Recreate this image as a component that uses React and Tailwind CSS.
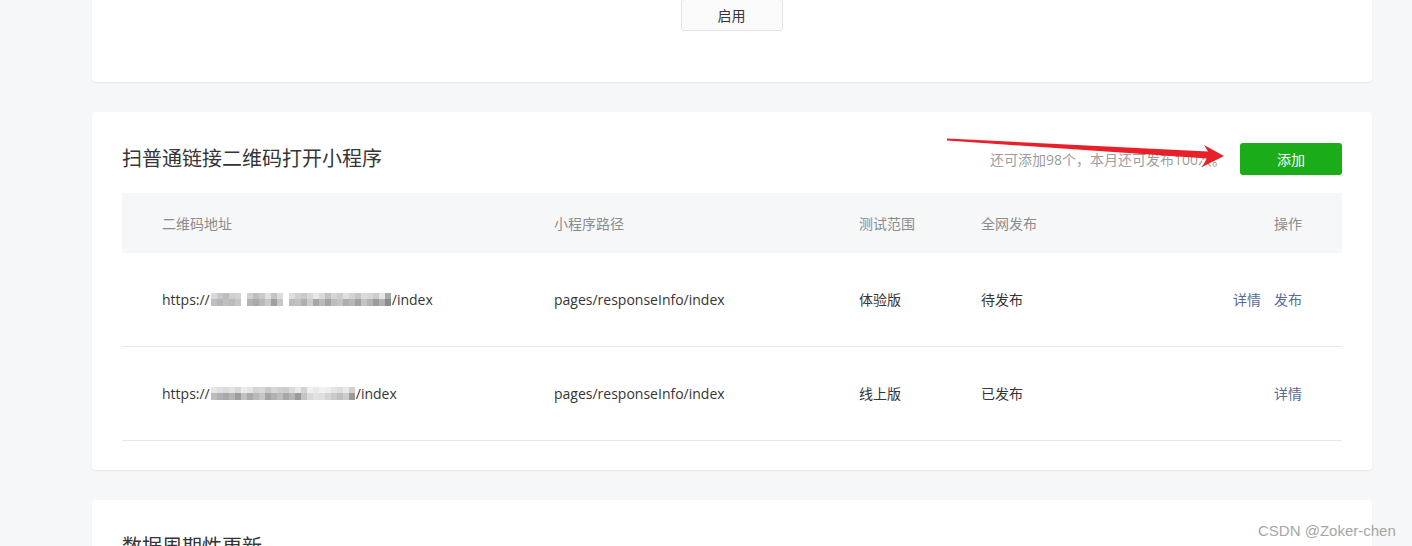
import React from "react";

const blur1Top = ["#d9d9d9","#c8c8c8","#bdbdbd","#cfcfcf","#d4d4d4","#fff","#d0d0d0","#bfbfbf","#cacaca","#e2e2e2","#c4c4c4","#dcdcdc","#fff","#dedede","#d0d0d0","#c9c9c9","#d8d8d8","#e8e8e8","#dadada","#c2c2c2","#d5d5d5","#cdcdcd","#e0e0e0","#d3d3d3","#c7c7c7","#dbdbdb","#d6d6d6","#cbcbcb","#e4e4e4","#aaaaaa"];
const blur1Bot = ["#bfbfbf","#b5b5b5","#c0c0c0","#bbbbbb","#c6c6c6","#fff","#b3b3b3","#a9a9a9","#b8b8b8","#c9c9c9","#9f9f9f","#c5c5c5","#fff","#bcbcbc","#c1c1c1","#afafaf","#cbcbcb","#a6a6a6","#b9b9b9","#a3a3a3","#bdbdbd","#c4c4c4","#aeaeae","#b7b7b7","#a1a1a1","#c3c3c3","#b2b2b2","#9c9c9c","#b0b0b0","#8a8a8a"];
const blur2Top = ["#e6e6e6","#e0e0e0","#dcdcdc","#e3e3e3","#d8d8d8","#ececec","#e5e5e5","#d4d4d4","#d9d9d9","#c8c8c8","#d6d6d6","#cfcfcf","#cccccc","#dadada","#e8e8e8","#d2d2d2","#f0f0f0","#eaeaea","#f2f2f2","#ededed","#e4e4e4","#dedede","#e9e9e9","#d0d0d0"];
const blur2Bot = ["#bdbdbd","#b1b1b1","#a9a9a9","#b5b5b5","#9e9e9e","#c2c2c2","#aaaaaa","#b8b8b8","#c6c6c6","#a4a4a4","#b2b2b2","#bcbcbc","#a7a7a7","#b6b6b6","#9a9a9a","#c3c3c3","#d9d9d9","#e2e2e2","#dfdfdf","#d3d3d3","#c9c9c9","#bfbfbf","#cccccc","#9b9b9b"];

function Blur({ top, bot }) {
  return (
    <span className="inline-flex flex-col align-middle mx-[1px]">
      <span className="flex">
        {top.map((c, i) => (
          <span key={i} className="block w-[6px] h-[6px]" style={{ background: c }} />
        ))}
      </span>
      <span className="flex">
        {bot.map((c, i) => (
          <span key={i} className="block w-[6px] h-[7px]" style={{ background: c }} />
        ))}
      </span>
    </span>
  );
}

function Row({ url, range, status, actions }) {
  return (
    <div className="grid grid-cols-[432px_305px_122px_1fr_220px] h-[94px] items-center border-b border-[#e7e7e7] text-[14px] text-[#353535]">
      <div className="pl-10 flex items-center whitespace-nowrap">{url}</div>
      <div>pages/responseInfo/index</div>
      <div>{range}</div>
      <div>{status}</div>
      <div className="pr-10 flex justify-end gap-[13px] text-[#576b95]">
        {actions.map((a) => (
          <span key={a}>{a}</span>
        ))}
      </div>
    </div>
  );
}

export default function App() {
  return (
    <div className="relative w-[1412px] h-[546px] overflow-hidden bg-[#f6f7f9] font-['Open_Sans','Noto_Sans_CJK_SC',sans-serif]">
      <div className="ml-[92px] w-[1280px] mt-[-21px] flex flex-col gap-[30px]">
        {/* Card 1 */}
        <div className="bg-white rounded-[4px] shadow-[0_1px_2px_rgba(0,0,0,0.07)] pt-[20px] pb-[51px] flex justify-center">
          <button className="ml-[-1px] w-[102px] h-[32px] border border-[#e4e4e4] bg-[#fafafa] rounded-[3px] text-[14px] text-[#353535]">
            启用
          </button>
        </div>

        {/* Card 2 */}
        <div className="relative bg-white rounded-[4px] shadow-[0_1px_2px_rgba(0,0,0,0.07)] px-[30px] pt-[31px] pb-[29px]">
          <div className="flex items-center h-[32px] mb-[18px]">
            <h2 className="text-[20px] text-[#353535] font-normal flex-1">扫普通链接二维码打开小程序</h2>
            <span className="text-[14px] text-[#9d9d9d] mr-[14px]">还可添加98个，本月还可发布100次。</span>
            <button className="w-[102px] h-[32px] rounded-[3px] bg-[#1aad19] text-white text-[14px]">添加</button>
          </div>

          <div>
            <div className="grid grid-cols-[432px_305px_122px_1fr_220px] h-[60px] items-center bg-[#f6f7f9] text-[14px] text-[#8c8c8c]">
              <div className="pl-10">二维码地址</div>
              <div>小程序路径</div>
              <div>测试范围</div>
              <div>全网发布</div>
              <div className="pr-10 text-right">操作</div>
            </div>
            <Row
              url={<>https://<Blur top={blur1Top} bot={blur1Bot} />/index</>}
              range="体验版"
              status="待发布"
              actions={["详情", "发布"]}
            />
            <Row
              url={<>https://<Blur top={blur2Top} bot={blur2Bot} />/index</>}
              range="线上版"
              status="已发布"
              actions={["详情"]}
            />
          </div>
        </div>

        {/* Card 3 */}
        <div className="bg-white rounded-[4px] shadow-[0_1px_2px_rgba(0,0,0,0.07)] px-[30px] pt-[31px] pb-[30px]">
          <div className="flex items-center h-[32px]">
            <h2 className="text-[20px] text-[#353535] font-normal">数据周期性更新</h2>
          </div>
        </div>
      </div>

      {/* annotation arrow */}
      <svg className="absolute left-0 top-0 pointer-events-none" width="1412" height="546" viewBox="0 0 1412 546">
        <polygon
          points="947,138.5 1208,151.5 1204,145 1224,156 1202,167 1207,158.5 947,140.5"
          fill="#e8202a"
        />
      </svg>

      {/* watermark */}
      <div className="absolute left-[1258px] top-[520px] text-[15px] text-[#a6a6a6] font-['Liberation_Sans',sans-serif] pointer-events-none">
        CSDN @Zoker-chen
      </div>
    </div>
  );
}
